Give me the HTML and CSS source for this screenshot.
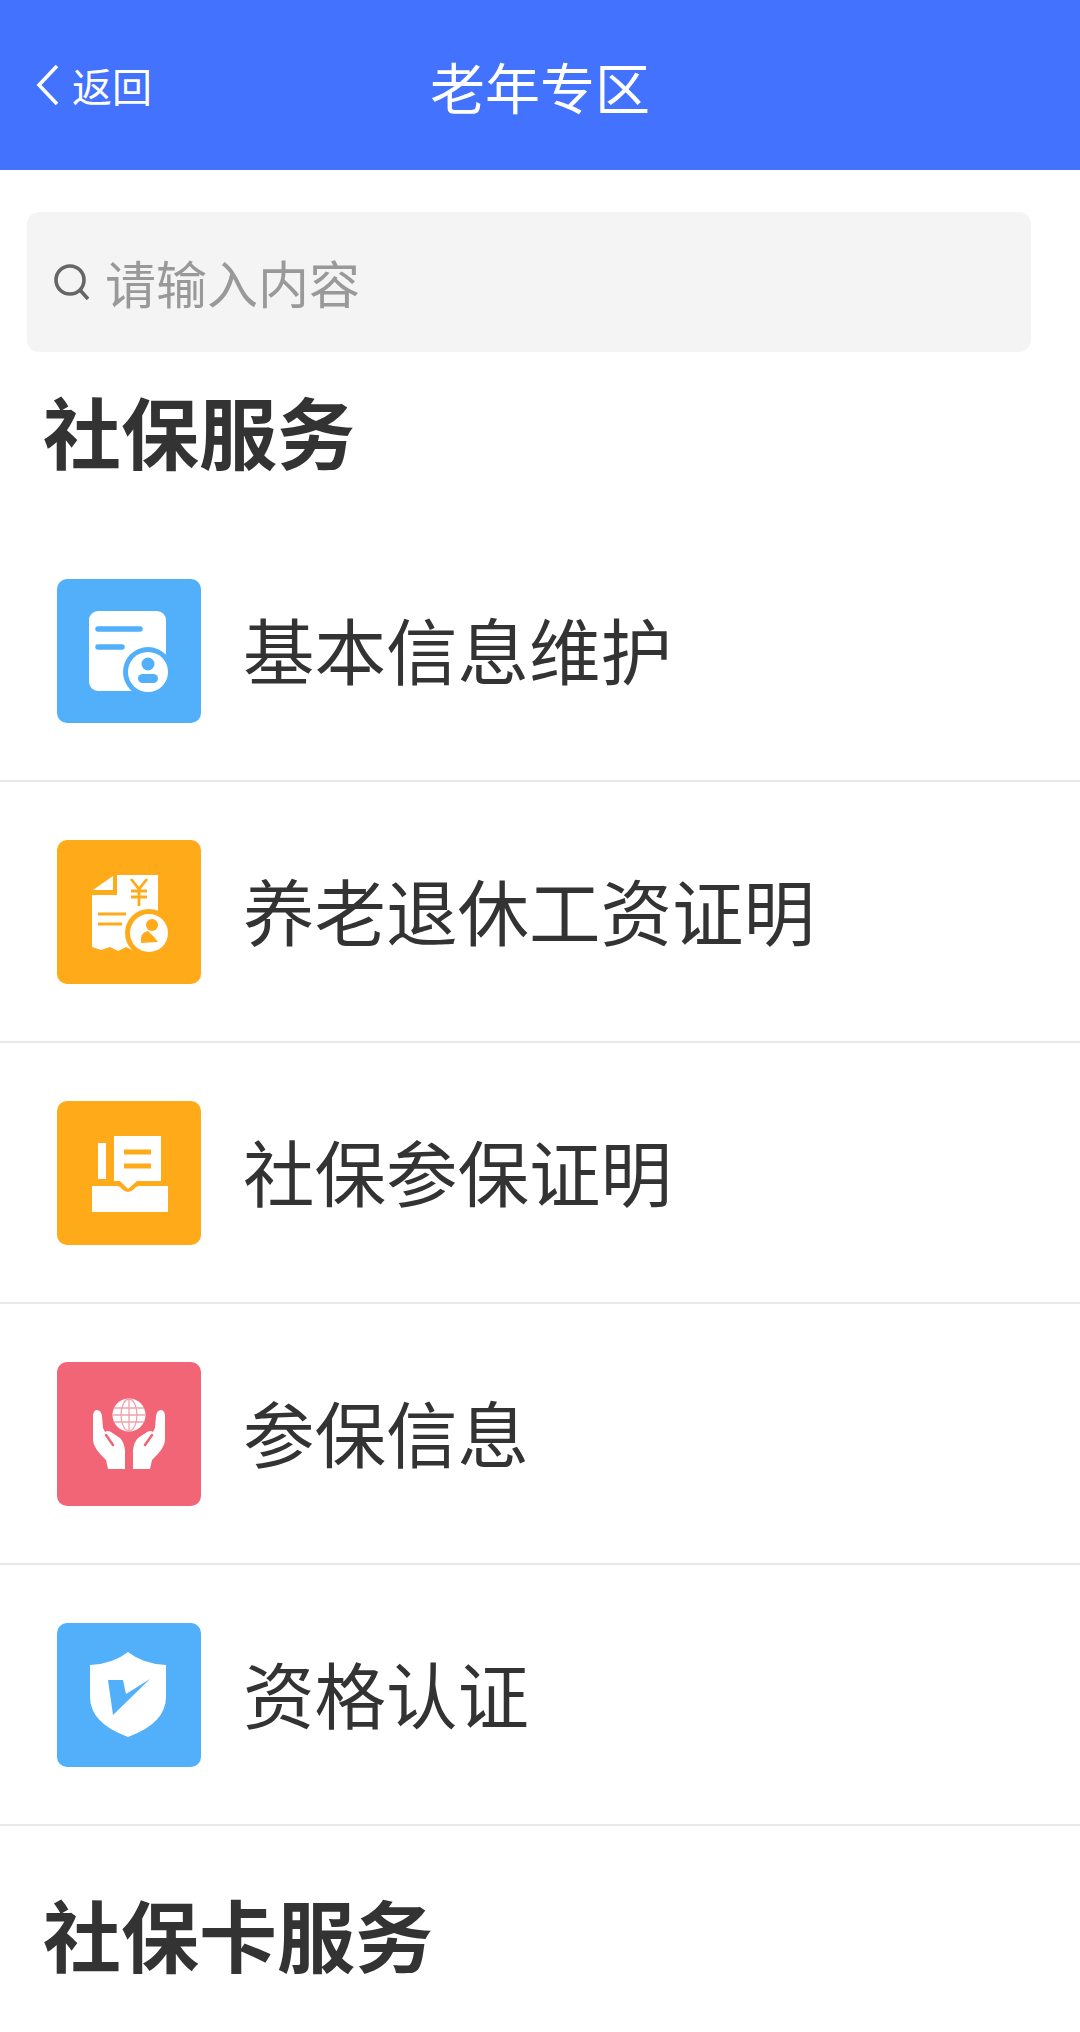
FILE: index.html
```html
<!DOCTYPE html>
<html lang="zh-CN">
<head>
    <meta charset="UTF-8">
    <meta name="viewport" content="width=device-width, initial-scale=1.0">
    <title>老年专区</title>
    <link rel="stylesheet" href="styles.css">
</head>
<body>
    <header class="topbar">
        <div class="back">
            <svg class="back-icon" viewBox="0 0 24 42"><path d="M21 2 L3 21 L21 40" fill="none" stroke="#fff" stroke-width="3.6"/></svg>
            <span>返回</span>
        </div>
        <h1 class="title">老年专区</h1>
    </header>

    <div class="search">
        <svg class="search-icon" viewBox="0 0 36 36"><circle cx="16" cy="16" r="14" fill="none" stroke="#666" stroke-width="3.6"/><path d="M26 26 L34 35" stroke="#666" stroke-width="3.6"/></svg>
        <span class="placeholder">请输入内容</span>
    </div>

    <h2 class="section-title first">社保服务</h2>
    <ul class="menu">
        <li class="menu-item">
            <svg class="tile" viewBox="0 0 144 144">
                <rect width="144" height="144" rx="10" fill="#52b0fb"/>
                <rect x="32" y="32" width="77" height="80" rx="9" fill="#fff"/>
                <path d="M41 50 H83 M41 68 H65" stroke="#52b0fb" stroke-width="5.5" stroke-linecap="round"/>
                <circle cx="91" cy="93" r="25" fill="#52b0fb"/>
                <circle cx="91" cy="93" r="20" fill="#fff"/>
                <circle cx="91" cy="85" r="6.5" fill="#52b0fb"/>
                <rect x="81" y="95" width="20" height="9" rx="4.5" fill="#52b0fb"/>
            </svg>
            <span>基本信息维护</span>
        </li>
        <li class="menu-item">
            <svg class="tile" viewBox="0 0 144 144">
                <rect width="144" height="144" rx="10" fill="#ffab19"/>
                <path d="M36 50 L56 36 V50 Z" fill="#fff"/>
                <path d="M60 35 H101 V108 L93 111 L85 107 L77 111 L69 107 L61 111 L53 107 L44 110 L35 107 V55 H60 Z" fill="#fff"/>
                <path d="M74 39 L82 49 L90 39 M74 51 H90 M74 57 H90 M82 49 V66" fill="none" stroke="#ffab19" stroke-width="2.8"/>
                <path d="M41 74 H69 M41 84 H65" stroke="#ffab19" stroke-width="3"/>
                <circle cx="92" cy="93" r="24" fill="#ffab19"/>
                <circle cx="92" cy="93" r="19" fill="#fff"/>
                <circle cx="95" cy="85" r="6" fill="#ffab19"/>
                <path d="M84 103 Q83 92 91 91 L97 97 L101 102 Z" fill="#ffab19"/>
            </svg>
            <span>养老退休工资证明</span>
        </li>
        <li class="menu-item">
            <svg class="tile" viewBox="0 0 144 144">
                <rect width="144" height="144" rx="10" fill="#ffab19"/>
                <rect x="41" y="42" width="8" height="36" fill="#fff"/>
                <path d="M57 35 H104 V80 H80 L71 88 L63 80 H57 Z" fill="#fff"/>
                <path d="M67 51 H94 M67 65 H94" stroke="#ffab19" stroke-width="5"/>
                <path d="M35 85 H60 Q63 85 65 88 Q71 94 77 88 Q79 85 83 85 H111 V111 H35 Z" fill="#fff"/>
            </svg>
            <span>社保参保证明</span>
        </li>
        <li class="menu-item">
            <svg class="tile" viewBox="0 0 144 144">
                <rect width="144" height="144" rx="10" fill="#f26577"/>
                <circle cx="72" cy="53" r="16.5" fill="#fff"/>
                <g fill="none" stroke="#f4a0aa" stroke-width="1.3">
                    <ellipse cx="72" cy="53" rx="8" ry="16"/>
                    <path d="M72 37 V69 M57 46 H87 M56 53 H88 M57 60 H87"/>
                </g>
                <path d="M36 53 Q37 48 40 48 Q44 48 45 54 L46 66 L48 70 Q50 68 54 70 L63 76 Q67 80 68 88 V107 H51 L49 98 Q36 86 36 78 Z" fill="#fff"/>
                <path d="M108 53 Q107 48 104 48 Q100 48 99 54 L98 66 L96 70 Q94 68 90 70 L81 76 Q77 80 76 88 V107 H93 L95 98 Q108 86 108 78 Z" fill="#fff"/>
                <path d="M49 73 L56 83 M95 73 L88 83" stroke="#f26577" stroke-width="2.5" stroke-linecap="round"/>
            </svg>
            <span>参保信息</span>
        </li>
        <li class="menu-item">
            <svg class="tile" viewBox="0 0 144 144">
                <rect width="144" height="144" rx="10" fill="#52b0fb"/>
                <path d="M71 29 Q86 41 109 42 V74 Q109 100 71 114 Q33 100 33 74 V42 Q56 41 71 29 Z" fill="#fff"/>
                <path d="M51 57 H66 L69 71 L93 56 L56 92 Z" fill="#52b0fb"/>
            </svg>
            <span>资格认证</span>
        </li>
    </ul>

    <h2 class="section-title">社保卡服务</h2>
</body>
</html>
```

FILE: styles.css
```css
* {
    padding: 0;
    margin: 0;
    box-sizing: border-box;
}

body {
    font-family: "Noto Sans CJK SC", "Noto Sans", sans-serif;
    background-color: #fff;
    color: #333;
    height: 2032px;
    overflow: hidden;
}

.topbar {
    display: grid;
    grid-template-columns: 1fr auto 1fr;
    align-items: center;
    height: 170px;
    padding: 0 36px;
    background-color: #4272fe;
    color: #fff;
}

.back {
    display: flex;
    align-items: center;
    gap: 12px;
    font-size: 40px;
}

.back-icon {
    width: 24px;
    height: 42px;
}

.title {
    font-size: 55px;
    font-weight: 400;
}

.search {
    display: flex;
    align-items: center;
    gap: 15px;
    width: 1004px;
    height: 140px;
    margin: 42px 0 0 27px;
    padding-left: 27px;
    background-color: #f4f4f4;
    border-radius: 12px;
}

.search-icon {
    width: 36px;
    height: 36px;
}

.placeholder {
    font-size: 51px;
    color: #999;
}

.section-title {
    height: 112px;
    padding-left: 43px;
    font-size: 78px;
    font-weight: 700;
    line-height: 112px;
}

.section-title.first {
    margin-top: 22px;
}

.menu {
    list-style: none;
    margin-top: 35px;
}

.menu-item {
    display: flex;
    align-items: center;
    gap: 42px;
    height: 261px;
    padding-left: 57px;
    border-bottom: 2px solid #e9e9e9;
    font-size: 71.5px;
}

.menu-item span {
    margin-bottom: 5px;
}

.tile {
    flex: none;
    width: 144px;
    height: 144px;
}

.menu + .section-title {
    margin-top: 51px;
}
```
